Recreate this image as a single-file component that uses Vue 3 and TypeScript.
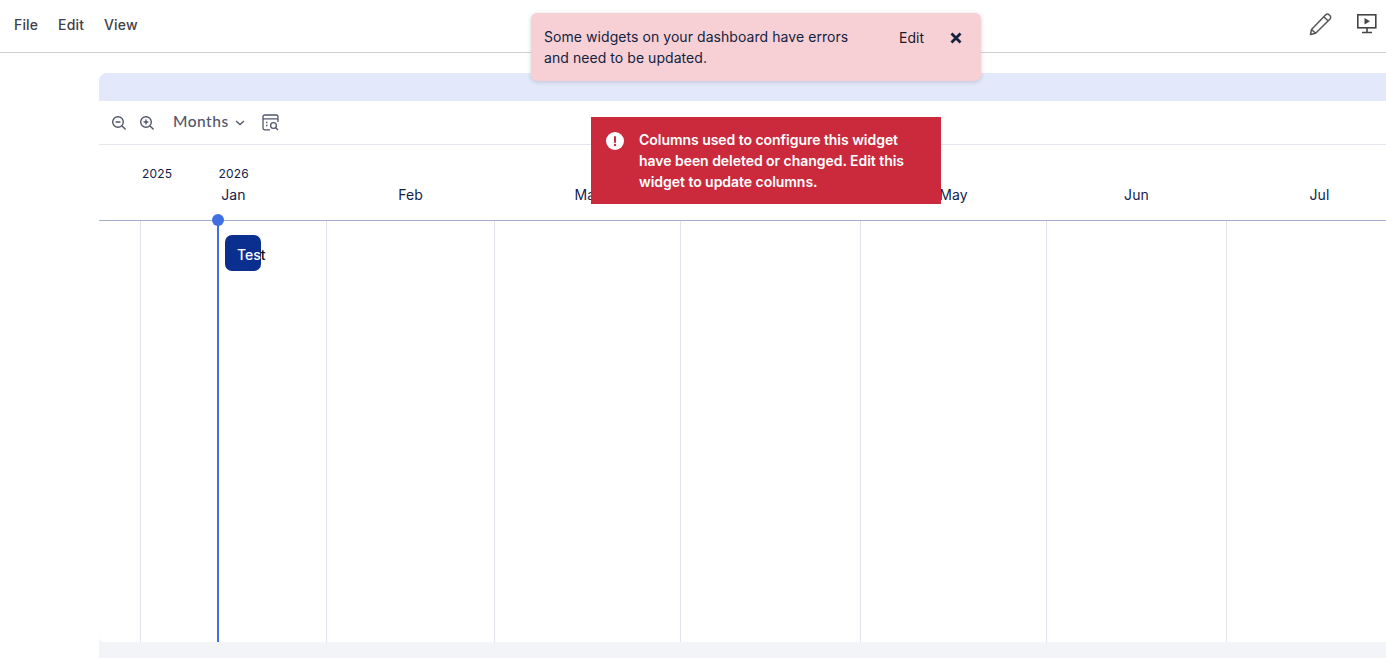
<script setup lang="ts">
interface Month { label: string; width: number }
const months: Month[] = [
  { label: 'Jan', width: 186 },
  { label: 'Feb', width: 168 },
  { label: 'Mar', width: 186 },
  { label: 'Apr', width: 180 },
  { label: 'May', width: 186 },
  { label: 'Jun', width: 180 },
  { label: 'Jul', width: 186 },
]
</script>

<template>
  <div class="page">
    <header class="topbar">
      <nav class="menu">
        <span>File</span>
        <span>Edit</span>
        <span>View</span>
      </nav>
      <div class="top-actions">
        <svg width="26" height="26" viewBox="0 0 26 26" fill="none" stroke="#555" stroke-width="1.5" stroke-linejoin="round">
          <path d="M3.5 23.5 L4.5 18.5 L18.5 4 Q20 2.6 21.5 3.2 L23.5 5.2 Q24.2 6.8 22.8 8.2 L8.6 22.3 Z" />
          <path d="M17 6 L21.3 10" />
          <path d="M4.5 18.5 L8.6 22.3" />
        </svg>
        <svg width="22" height="22" viewBox="0 0 22 22" fill="none" stroke="#444" stroke-width="1.6">
          <rect x="1.8" y="1.8" width="18" height="13" />
          <path d="M8.5 5 L14 8.3 L8.5 11.5 Z" fill="#444" stroke="none" />
          <path d="M11 15 V19 M6 19.5 H16" />
        </svg>
      </div>
    </header>

    <main class="content">
      <div class="widget">
        <div class="banner"></div>
        <section class="panel">
          <div class="toolbar">
            <svg class="tool" width="16" height="16" viewBox="0 0 16 16" fill="none" stroke="#51566b" stroke-width="1.4">
              <circle cx="7" cy="7" r="5.3" />
              <path d="M4.6 7 H9.4 M11 11 L14.6 14.6" />
            </svg>
            <svg class="tool" width="16" height="16" viewBox="0 0 16 16" fill="none" stroke="#51566b" stroke-width="1.4">
              <circle cx="7" cy="7" r="5.3" />
              <path d="M4.6 7 H9.4 M7 4.6 V9.4 M11 11 L14.6 14.6" />
            </svg>
            <span class="scale">Months</span>
            <svg class="chev" width="10" height="6" viewBox="0 0 10 6" fill="none" stroke="#51566b" stroke-width="1.3">
              <path d="M1 1 L5 4.6 L9 1" />
            </svg>
            <svg class="cal" width="17" height="17" viewBox="0 0 17 17" fill="none" stroke="#51566b" stroke-width="1.3">
              <path d="M8 15.8 H3 Q1 15.8 1 13.8 V3 Q1 1 3 1 H14 Q16 1 16 3 V8" />
              <path d="M1 4.8 H16" />
              <path d="M4 8.5 H5.4 M4 11.5 H5.4" />
              <circle cx="11.5" cy="11.5" r="2.9" />
              <path d="M13.6 13.6 L16 16" />
            </svg>
          </div>

          <div class="timeline">
            <div class="header">
              <div class="years">
                <span class="year y25">2025</span>
                <span class="year y26">2026</span>
              </div>
              <div class="labels">
                <div class="lead"></div>
                <div v-for="m in months" :key="m.label" class="label" :style="{ width: m.width + 'px' }">{{ m.label }}</div>
              </div>
            </div>
            <div class="grid">
              <div class="lead"></div>
              <div v-for="m in months" :key="m.label" class="col" :style="{ width: m.width + 'px' }"></div>
              <div class="today"><i class="dot"></i></div>
              <div class="bar"><span>Tes<b>t</b></span></div>
            </div>
          </div>
        </section>
      </div>
    </main>

    <div class="toast-pink">
      <p>Some widgets on your dashboard have errors and need to be updated.</p>
      <span class="edit">Edit</span>
      <svg width="12" height="12" viewBox="0 0 12 12" stroke="#12233f" stroke-width="2.8" fill="none">
        <path d="M1.5 1.5 L10.5 10.5 M10.5 1.5 L1.5 10.5" />
      </svg>
    </div>

    <div class="toast-red">
      <svg width="18" height="18" viewBox="0 0 18 18">
        <circle cx="9" cy="9" r="9" fill="#fff" />
        <rect x="8" y="4" width="2" height="7" rx="1" fill="#cb2a3d" />
        <circle cx="9" cy="13" r="1.2" fill="#cb2a3d" />
      </svg>
      <p>Columns used to configure this widget have been deleted or changed. Edit this widget to update columns.</p>
    </div>
  </div>
</template>

<style>
html, body { margin: 0; background: #fff; overflow: hidden; }
</style>

<style scoped>
.page {
  position: relative;
  width: 1386px;
  height: 658px;
  overflow: hidden;
  font-family: Inter, "Liberation Sans", sans-serif;
  background: #fff;
}
.topbar {
  height: 52px;
  border-bottom: 1px solid #cfcfd2;
  display: flex;
  align-items: center;
  justify-content: space-between;
}
.menu {
  display: flex;
  gap: 20px;
  padding: 0 0 3px 14px;
  font-size: 14px;
  font-weight: 500;
  letter-spacing: 0.14px;
  color: #3f4147;
}
.top-actions {
  display: flex;
  align-items: center;
  gap: 23px;
  padding: 0 8px 5px 0;
}
.content { padding: 20px 0 0 99px; }
.widget {
  height: 585px;
  background: #f3f4f8;
  border-top-left-radius: 8px;
  overflow: hidden;
}
.banner { height: 28px; background: #e3e9fb; }
.panel {
  height: 541px;
  background: #fff;
  border-bottom-left-radius: 5px;
  overflow: hidden;
}
.toolbar {
  height: 43px;
  border-bottom: 1px solid #e4e6f0;
  display: flex;
  align-items: center;
  padding-left: 12px;
  box-sizing: content-box;
}
.tool { margin-right: 12px; }
.scale {
  margin: 0 0 3px 6px;
  font-family: Lato, sans-serif;
  font-size: 15.5px;
  font-weight: 500;
  letter-spacing: 0.5px;
  color: #51566b;
}
.chev { margin-left: 6px; }
.cal { margin-left: 17px; }
.header { height: 75px; position: relative; }
.years {
  height: 58px;
  position: relative;
}
.year {
  position: absolute;
  top: 21px;
  font-size: 12px;
  letter-spacing: 0.14px;
  color: #14224a;
  line-height: 16px;
}
.y25 { left: 43px; }
.y26 { left: 119.5px; }
.labels {
  display: flex;
  width: 1400px;
  margin-top: -18px;
}
.lead { width: 41px; flex: none; }
.label {
  flex: none;
  text-align: center;
  font-size: 14px;
  letter-spacing: 0.1px;
  line-height: 20px;
  color: #14224a;
  padding-left: 1px;
  box-sizing: border-box;
}
.grid {
  position: relative;
  display: flex;
  width: 1400px;
  height: 422px;
  border-top: 1px solid #a6adca;
}
.col {
  flex: none;
  box-sizing: border-box;
  border-left: 1px solid #e3e4f0;
}
.today {
  position: absolute;
  left: 118px;
  top: -1px;
  bottom: 0;
  width: 2px;
  background: #3f6fe0;
}
.dot {
  position: absolute;
  left: -5px;
  top: -6px;
  width: 12px;
  height: 12px;
  border-radius: 50%;
  background: #3f6fe0;
}
.bar {
  position: absolute;
  left: 126px;
  top: 14px;
  width: 36px;
  height: 36px;
  border-radius: 7px;
  background: #0a2f8f;
  display: flex;
  align-items: center;
  padding: 2px 0 0 12px;
  box-sizing: border-box;
  font-size: 14px;
  font-weight: 500;
  color: #fff;
  white-space: nowrap;
}
.bar b { font-weight: 500; color: #111; }
.toast-pink {
  position: absolute;
  left: 531px;
  top: 13px;
  width: 450px;
  height: 68px;
  box-sizing: border-box;
  padding: 14px 18px 0 13px;
  display: flex;
  align-items: flex-start;
  background: #f7d0d5;
  border-radius: 6px;
  box-shadow: 0 1px 4px rgba(40, 40, 60, 0.2);
  color: #12233f;
  font-size: 14px;
  letter-spacing: 0.06px;
  line-height: 21px;
}
.toast-pink p { margin: -1px 0 0; width: 320px; flex: none; }
.edit { margin-left: 35px; color: #1b1b25; }
.toast-pink svg { margin-left: 26px; margin-top: 5px; flex: none; }
.toast-red {
  position: absolute;
  left: 591px;
  top: 117px;
  width: 350px;
  height: 87px;
  box-sizing: border-box;
  padding: 12px 20px 0 15px;
  display: flex;
  align-items: flex-start;
  background: #cb2a3d;
  color: #fff;
  font-size: 14px;
  font-weight: 600;
  letter-spacing: -0.04px;
  line-height: 21px;
}
.toast-red svg { flex: none; margin-top: 3px; }
.toast-red p { margin: 0 0 0 15px; }
</style>
